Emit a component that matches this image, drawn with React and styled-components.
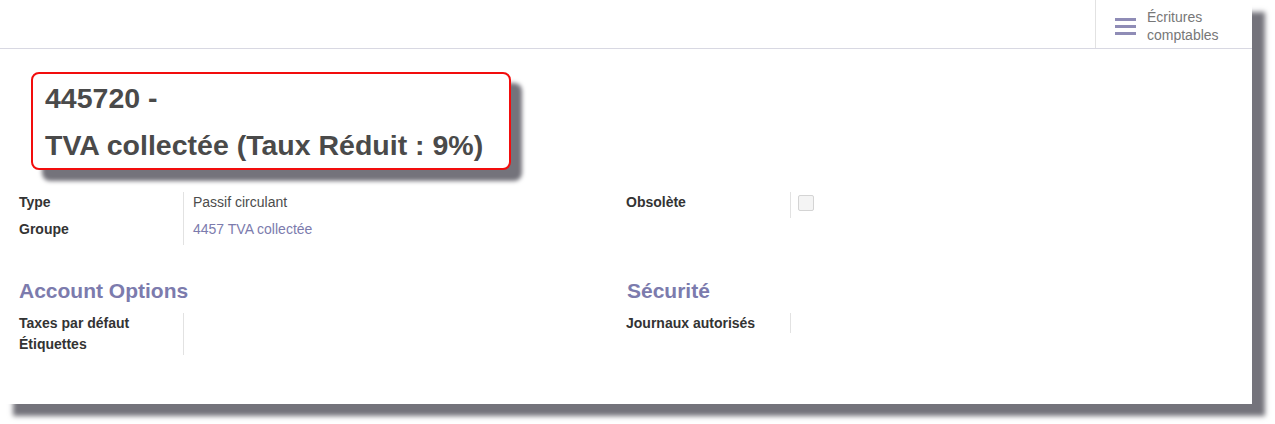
import React from 'react';
import styled, { createGlobalStyle } from 'styled-components';

const GlobalStyle = createGlobalStyle`
  html, body { margin: 0; padding: 0; background: #ffffff; }
  body { font-family: "Liberation Sans", Arial, sans-serif; color: #4c4c4c; }
`;

const Page = styled.div`
  width: 1275px;
  height: 424px;
  overflow: hidden;
`;

const Sheet = styled.div`
  width: 1252px;
  height: 404px;
  background: #ffffff;
  box-shadow: 13px 12px 5px #74737b;
`;

const ControlBar = styled.div`
  height: 48px;
  border-bottom: 1px solid #d8d8e2;
  display: flex;
  justify-content: flex-end;
`;

const SmartButton = styled.div`
  width: 157px;
  border-left: 1px solid #e2e2e2;
  display: flex;
  align-items: center;
  padding-left: 19px;
  gap: 11px;
  box-sizing: border-box;
`;

const ButtonText = styled.div`
  font-size: 14px;
  line-height: 18px;
  color: #777777;
  margin-top: 3px;
`;

const Body = styled.div`
  padding: 23px 19px 0 19px;
`;

const TitleBox = styled.div`
  margin-left: 12px;
  width: 480px;
  height: 98px;
  box-sizing: border-box;
  border: 2px solid #f20d0d;
  border-radius: 8px;
  box-shadow: 11px 11px 4px #74737b;
  background: #ffffff;
  padding: 8px 0 0 12px;
`;

const TitleLine = styled.div`
  font-size: 28.5px;
  font-weight: bold;
  color: #4a4a4a;
  line-height: 32px;
  margin-bottom: ${p => p.gap || 0}px;
`;

const Columns = styled.div`
  display: grid;
  grid-template-columns: 607px 1fr;
  margin-top: ${p => p.top}px;
`;

const Group = styled.div`
  display: grid;
  grid-template-columns: 165px 1fr;
  align-content: start;
`;

const Label = styled.div`
  font-size: 14px;
  font-weight: bold;
  color: #333333;
  height: ${p => p.h}px;
  line-height: ${p => p.lh || p.h}px;
  border-right: 1px solid #e2e2e2;
  white-space: nowrap;
`;

const Value = styled.div`
  font-size: 14px;
  color: ${p => (p.link ? '#7c7bad' : '#4c4c4c')};
  height: ${p => p.h}px;
  line-height: ${p => p.lh || p.h}px;
  padding-left: 9px;
`;

const Check = styled.span`
  display: block;
  width: 14px;
  height: 14px;
  border: 1px solid #d4d4d4;
  border-radius: 2px;
  background: #f4f4f4;
  margin: 3px 0 0 -2px;
`;

const SectionTitle = styled.div`
  grid-column: 1 / -1;
  font-size: 21px;
  font-weight: bold;
  color: #7c7bad;
  height: 24px;
  line-height: 24px;
  margin: 0 0 10px ${p => p.shift || 0}px;
`;

const MenuIcon = () => (
  <svg width="21" height="18" viewBox="0 0 21 18" style={{ marginTop: 4 }}>
    <rect x="0" y="1" width="21" height="3" fill="#8f8cb6" />
    <rect x="0" y="8" width="21" height="3" fill="#8f8cb6" />
    <rect x="0" y="15" width="21" height="3" fill="#8f8cb6" />
  </svg>
);

export default function App() {
  return (
    <Page>
      <GlobalStyle />
      <Sheet>
        <ControlBar>
          <SmartButton>
            <MenuIcon />
            <ButtonText>
              Écritures
              <br />
              comptables
            </ButtonText>
          </SmartButton>
        </ControlBar>
        <Body>
          <TitleBox>
            <TitleLine gap={15}>445720 -</TitleLine>
            <TitleLine>TVA collectée (Taux Réduit : 9%)</TitleLine>
          </TitleBox>
          <Columns top={22}>
            <Group>
              <Label h={26} lh={20}>Type</Label>
              <Value h={26} lh={20}>Passif circulant</Value>
              <Label h={27} lh={22}>Groupe</Label>
              <Value h={27} lh={22} link>4457 TVA collectée</Value>
            </Group>
            <Group>
              <Label h={26} lh={20}>Obsolète</Label>
              <Value h={26}>
                <Check />
              </Value>
            </Group>
          </Columns>
          <Columns top={34}>
            <Group>
              <SectionTitle>Account Options</SectionTitle>
              <Label h={21}>Taxes par défaut</Label>
              <Value h={21} />
              <Label h={21}>Étiquettes</Label>
              <Value h={21} />
            </Group>
            <Group>
              <SectionTitle shift={1}>Sécurité</SectionTitle>
              <Label h={20}>Journaux autorisés</Label>
              <Value h={20} />
            </Group>
          </Columns>
        </Body>
      </Sheet>
    </Page>
  );
}
